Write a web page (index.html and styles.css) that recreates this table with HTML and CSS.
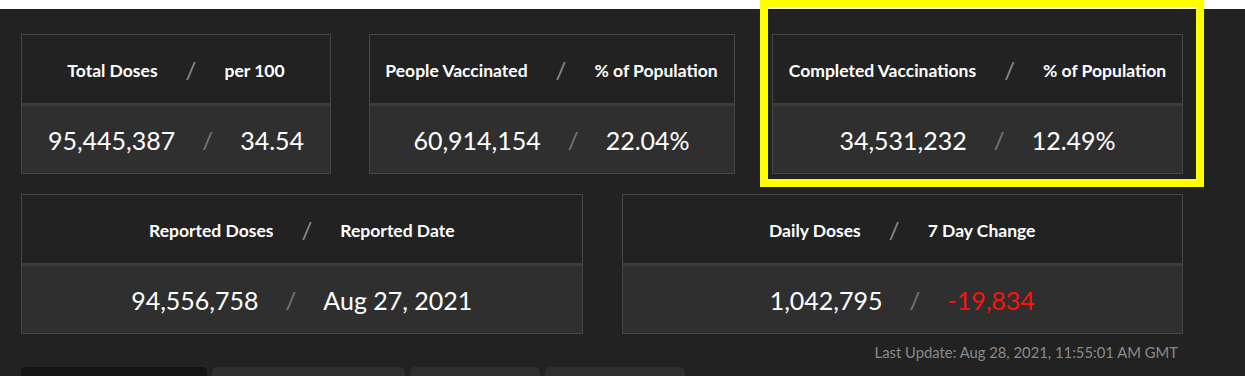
FILE: index.html
```html
<!DOCTYPE html>
<html lang="en">
<head>
<meta charset="utf-8">
<title>Vaccination Stats</title>
<link rel="stylesheet" href="styles.css">
</head>
<body>
<div class="topstrip"></div>
<main class="panel">
  <section class="row row-three">
    <div class="card">
      <div class="card-head"><span>Total Doses</span><span class="sep">/</span><span>per 100</span></div>
      <div class="card-val"><span>95,445,387</span><span class="sep">/</span><span>34.54</span></div>
    </div>
    <div class="card">
      <div class="card-head"><span>People Vaccinated</span><span class="sep">/</span><span>% of Population</span></div>
      <div class="card-val"><span>60,914,154</span><span class="sep">/</span><span>22.04%</span></div>
    </div>
    <div class="card">
      <div class="card-head"><span>Completed Vaccinations</span><span class="sep">/</span><span>% of Population</span></div>
      <div class="card-val"><span>34,531,232</span><span class="sep">/</span><span>12.49%</span></div>
    </div>
  </section>
  <section class="row row-two">
    <div class="card">
      <div class="card-head"><span>Reported Doses</span><span class="sep">/</span><span>Reported Date</span></div>
      <div class="card-val"><span>94,556,758</span><span class="sep">/</span><span>Aug 27, 2021</span></div>
    </div>
    <div class="card">
      <div class="card-head"><span>Daily Doses</span><span class="sep">/</span><span>7 Day Change</span></div>
      <div class="card-val"><span>1,042,795</span><span class="sep">/</span><span class="neg">-19,834</span></div>
    </div>
  </section>
  <p class="updated">Last Update: Aug 28, 2021, 11:55:01 AM GMT</p>
  <nav class="tabs">
    <div class="tab tab-active"></div>
    <div class="tab tab-2"></div>
    <div class="tab tab-3"></div>
    <div class="tab tab-4"></div>
  </nav>
</main>
<div class="highlight"></div>
</body>
</html>
```

FILE: styles.css
```css
* { box-sizing: border-box; }

html, body {
  margin: 0;
  padding: 0;
  background: #ffffff;
  overflow: hidden;
  height: 376px;
}

body {
  font-family: Lato, "Open Sans", "Liberation Sans", sans-serif;
  color: #ffffff;
  position: relative;
}

.topstrip {
  height: 9px;
  background: #ffffff;
}

.panel {
  background: #222222;
  padding: 25px 62px 0 21px;
  height: 367px;
}

.row {
  display: grid;
}

.row-three {
  grid-template-columns: 310fr 366fr 411fr;
  column-gap: 37.5px;
}

.row-two {
  grid-template-columns: 1fr 1fr;
  column-gap: 39px;
  margin-top: 20px;
}

.card {
  border: 1px solid #454545;
  background: #222222;
}

.card-head {
  height: 71px;
  display: flex;
  align-items: center;
  justify-content: center;
  font-weight: 700;
  font-size: 17.5px;
  border-bottom: 3px solid #3c3c3c;
  padding-top: 2px;
}

.card-val {
  height: 67px;
  display: flex;
  align-items: center;
  justify-content: center;
  background: #2f2f2f;
  font-size: 25px;
}

.sep {
  font-weight: 400;
  font-size: 24px;
  color: #8a8a8a;
  margin: 0 28px;
  line-height: 1;
}

.card-val .sep {
  color: #777777;
  margin: 0 27px;
}

.neg {
  color: #ff1010;
}

.updated {
  margin: 9px 5px 0 0;
  text-align: right;
  font-size: 14.8px;
  color: #8a8a8a;
  line-height: 18px;
}

.tabs {
  display: flex;
  gap: 5px;
  margin-top: 6px;
}

.tab {
  height: 20px;
  border-radius: 5px 5px 0 0;
  background: #2e2e2e;
}

.tab-active { width: 186px; background: #141414; }
.tab-2 { width: 193px; }
.tab-3 { width: 130px; }
.tab-4 { width: 140px; }

.highlight {
  position: absolute;
  left: 760px;
  top: -1px;
  width: 444px;
  height: 188px;
  border: 8px solid #ffff00;
}
```
